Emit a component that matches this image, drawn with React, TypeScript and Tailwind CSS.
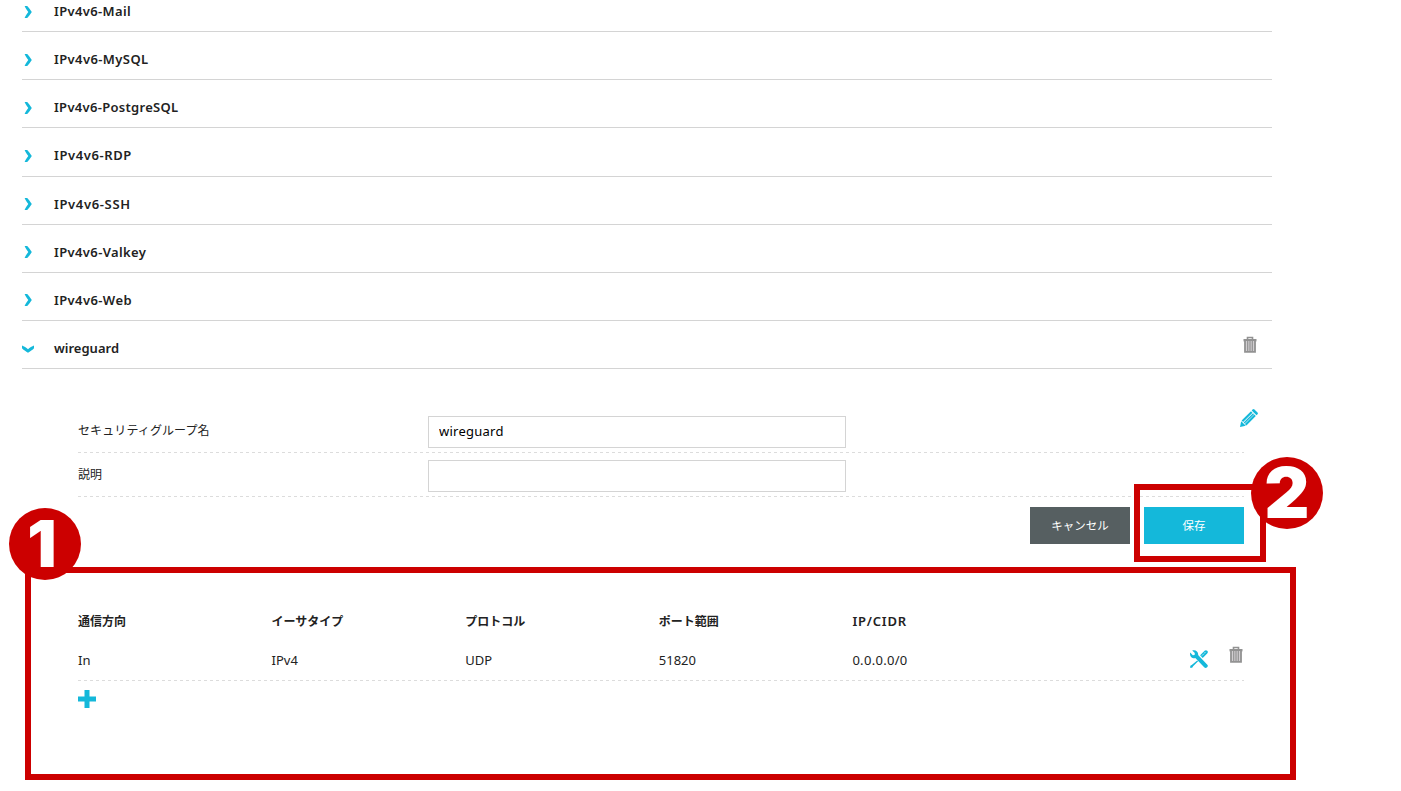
import type { ReactNode } from 'react'

const groups = [
  { name: 'IPv4v6-Mail', tracking: 'tracking-[0.35px]' },
  { name: 'IPv4v6-MySQL', tracking: 'tracking-[0.4px]' },
  { name: 'IPv4v6-PostgreSQL', tracking: 'tracking-[0.3px]' },
  { name: 'IPv4v6-RDP', tracking: 'tracking-[0.6px]' },
  { name: 'IPv4v6-SSH', tracking: 'tracking-[0.65px]' },
  { name: 'IPv4v6-Valkey', tracking: 'tracking-[0.38px]' },
  { name: 'IPv4v6-Web', tracking: 'tracking-[0.4px]' },
  { name: 'wireguard', tracking: 'tracking-normal', open: true },
]

const columns = [
  { title: '通信方向', value: 'In' },
  { title: 'イーサタイプ', value: 'IPv4' },
  { title: 'プロトコル', value: 'UDP' },
  { title: 'ポート範囲', value: '51820' },
  { title: 'IP/CIDR', value: '0.0.0.0/0', latin: true },
]

function Chevron({ open }: { open?: boolean }) {
  return (
    <svg viewBox="0 0 12 12" className={`mt-px size-3 shrink-0 fill-[#14b8da] ${open ? 'translate-y-px rotate-90' : ''}`}>
      <path d="M2.6 0h2.6C6.6 1.2 8.6 4 9.8 6 8.6 8 6.6 10.8 5.2 12H2.6C3.4 10 4.8 7.8 6.3 6 4.8 4.2 3.4 2 2.6 0z" />
    </svg>
  )
}

function Trash() {
  return (
    <svg viewBox="0 0 14 17" className="h-[17px] w-3.5 shrink-0" fill="none" stroke="#929292">
      <path d="M4.5 3.5v-2h5v2" strokeWidth="1.6" />
      <path d="M.5 4.2h13" strokeWidth="2.4" />
      <path d="M2 5v10.9h10V5" fill="#d2cfd2" strokeWidth="1.8" />
      <path d="M4.7 5v10M7 5v10M9.3 5v10" strokeWidth="1.2" />
    </svg>
  )
}

function Pencil() {
  return (
    <svg viewBox="0 0 18 18" className="size-[18px] shrink-0 fill-[#14b8da]">
      <path d="M0 18 1.2 12.2 5.8 16.8z" />
      <path d="M1.6 11.6 11 2.2l1.5 1.5L3.1 13.1zM4.9 14.9l9.4-9.4 1.5 1.5-9.4 9.4z" />
      <path d="m3.7 13.5 9.3-9.3 1 1-9.3 9.3z" />
      <path d="m11.7 1.5 1-1q.8-.8 1.7 0l3.1 3.1q.8.9 0 1.7l-1 1z" />
    </svg>
  )
}

function Tools() {
  return (
    <svg viewBox="0 0 18 18" className="size-[18px] shrink-0 fill-[#14b8da]">
      <path d="M2.2.5 4.8 3.1 4.6 4.9 2.8 5.2.2 2.6C-.5 5.2.8 7.8 3.4 8.2q1 .1 1.9-.2l8.9 9.3q1.4 1.4 2.9 0 1.5-1.5 0-2.9L8.1 5.1C8.7 2 5.6-.9 2.2.5z" />
      <path d="m7.2 10.4.9.9-5 5-.7 1.1-1.6.6-.8-.8.6-1.6 1.1-.7z" />
      <path d="m10.1 5.3 4.5-4.5q1.3-1.2 2.6 0t0 2.6l-4.5 4.5z" />
      <path d="m11.5 6.1 4.3-4.3" stroke="#fff" strokeWidth=".8" strokeDasharray="1 .6" />
    </svg>
  )
}

// 3px dashes on a 6px pitch
function Dashes() {
  return <div className="h-px bg-[repeating-linear-gradient(90deg,#dcdcdc_0_3px,transparent_3px_6px)]" />
}

function FormRow({ label, value }: { label: string; value: string }) {
  return (
    <div>
      <div className="flex h-[43px] items-start pt-[7px]">
        <label className="w-[350px] pt-[5px] leading-5 tracking-[0.1px]">{label}</label>
        <input
          type="text"
          defaultValue={value}
          className="h-8 w-[418px] border border-[#d4d4d4] bg-white px-2.5 pb-0.5 text-[13px] tracking-[0.25px] text-black outline-none"
        />
      </div>
      <Dashes />
    </div>
  )
}

function Badge({ children, className }: { children: ReactNode; className: string }) {
  return (
    <div className={`absolute flex size-[72px] items-center justify-center rounded-full bg-[#c00] font-['Inter'] font-black text-white ${className}`}>
      {children}
    </div>
  )
}

export default function App() {
  return (
    <div className="relative h-[791px] w-[1401px] overflow-hidden bg-white font-['Noto_Sans','Noto_Sans_CJK_JP',sans-serif] text-xs text-[#222]">
      <div className="-mt-4 ml-[22px] w-[1250px]">
        {groups.map(g => (
          <div key={g.name} className="flex h-[48.14px] items-center border-b border-[#d4d4d4] pt-[7px]">
            <Chevron open={g.open} />
            <span className={`ml-5 grow text-[13px] leading-5 font-semibold ${g.tracking}`}>{g.name}</span>
            {g.open && <div className="-mt-[7px] mr-[15px]"><Trash /></div>}
          </div>
        ))}

        <div className="ml-14 w-[1166px] pt-10">
          <div className="relative">
            <FormRow label="セキュリティグループ名" value="wireguard" />
            <FormRow label="説明" value="" />
            <div className="absolute top-0 left-[1162px]"><Pencil /></div>
          </div>

          <div className="mt-2.5 flex justify-end gap-3.5 text-[11.5px] text-white">
            <button className="h-[37px] w-[100px] bg-[#565f61]">キャンセル</button>
            <button className="h-[37px] w-[100px] bg-[#14b8da]">保存</button>
          </div>

          <div className="mt-[66px] flex h-[70px] pt-0.5">
            {columns.map(c => (
              <div key={c.title} className="w-[193.6px] shrink-0 leading-5">
                <div className={c.latin ? '-mt-px text-[13px] font-semibold tracking-[0.8px]' : 'font-bold'}>{c.title}</div>
                <div className={c.latin ? 'mt-[19px] text-[13px] tracking-[0.3px]' : 'mt-[18px] text-[13px]'}>{c.value}</div>
              </div>
            ))}
            <div className="flex grow justify-end gap-[21px] pt-[34px] pr-px">
              <div className="pt-1"><Tools /></div>
              <Trash />
            </div>
          </div>
          <Dashes />

          <svg viewBox="0 0 18 18" className="mt-[9px] size-[18px] fill-[#14b8da]">
            <path d="M6.5 0h5v6.5H18v5h-6.5V18h-5v-6.5H0v-5h6.5z" />
          </svg>
        </div>
      </div>

      {/* step markers */}
      <div className="absolute top-[567px] left-[25px] h-[213px] w-[1271px] border-6 border-[#c00]" />
      <div className="absolute top-[484px] left-[1134px] h-[78px] w-[132px] border-6 border-[#c00]" />
      <Badge className="top-[508px] left-[9px] pr-1.5 text-[65px]">1</Badge>
      <Badge className="top-[457px] left-[1251px] text-[70px]">2</Badge>
    </div>
  )
}
